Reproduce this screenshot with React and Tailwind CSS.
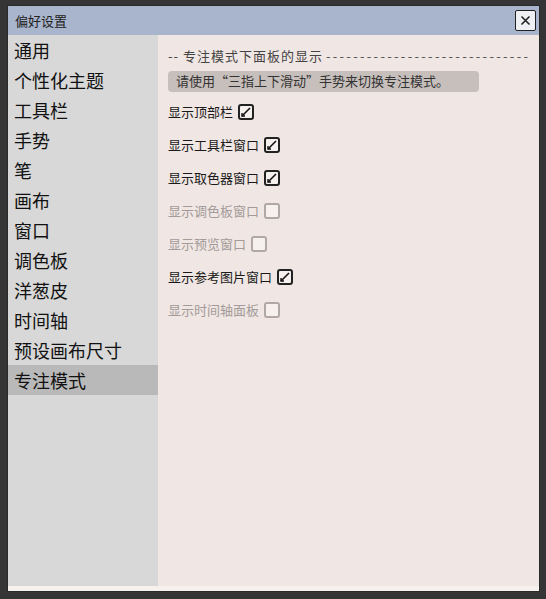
import React from 'react';

const font = { fontFamily: '"Noto Sans CJK SC", "Noto Sans", sans-serif' };

function Check({ on, disabled }) {
  return (
    <span
      className={`inline-flex w-[16px] h-[16px] rounded-[3px] border-2 items-center justify-center ${
        disabled ? 'border-[#b0a8a6]' : 'border-[#222]'
      } bg-[#f6f0ee]`}
    >
      {on && (
        <svg width="10" height="10" viewBox="0 0 10 10">
          <path d="M1 9 L9 1" stroke="#111" strokeWidth="1.6" />
          <path d="M1 6 L1 9 L4 9" stroke="#111" strokeWidth="1.4" fill="none" />
        </svg>
      )}
    </span>
  );
}

export default function App() {
  const nav = ['通用', '个性化主题', '工具栏', '手势', '笔', '画布', '窗口', '调色板', '洋葱皮', '时间轴', '预设画布尺寸', '专注模式'];
  const rows = [
    { label: '显示顶部栏', on: true },
    { label: '显示工具栏窗口', on: true },
    { label: '显示取色器窗口', on: true },
    { label: '显示调色板窗口', disabled: true },
    { label: '显示预览窗口', disabled: true },
    { label: '显示参考图片窗口', on: true },
    { label: '显示时间轴面板', disabled: true },
  ];

  return (
    <div className="w-[546px] h-[599px] bg-[#353535] pt-[5px] pl-[7px]" style={font}>
      <div className="w-[533px] h-[587px] bg-[#f6f1ec] border border-[#2a2a2a] flex flex-col">
        {/* title bar */}
        <div className="h-[29px] bg-[#a9b5cd] flex items-center justify-between pl-[7px] pr-[3px]">
          <span className="text-[13px] text-[#222]">偏好设置</span>
          <button className="w-[21px] h-[21px] border border-[#222] rounded-[2px] bg-[#eef0f4] flex items-center justify-center">
            <svg width="11" height="11" viewBox="0 0 11 11">
              <path d="M1.5 1.5 L9.5 9.5 M9.5 1.5 L1.5 9.5" stroke="#222" strokeWidth="1.6" />
            </svg>
          </button>
        </div>

        <div className="flex flex-1 pb-[5px]">
          {/* sidebar */}
          <div className="w-[150px] shrink-0 bg-[#d8d8d8]">
            {nav.map((n) => (
              <div
                key={n}
                className={`h-[30px] flex items-center pl-[6px] text-[18px] text-[#111] ${
                  n === '专注模式' ? 'bg-[#b9b9b9]' : ''
                }`}
              >
                {n}
              </div>
            ))}
          </div>

          {/* content */}
          <div className="flex-1 min-w-0 bg-[#f0e6e3] pl-[10px] pr-[9px] pt-[11px]">
            <div className="flex items-center text-[13px] text-[#444] whitespace-nowrap">
              <span className="tracking-[1px]">-- 专注模式下面板的显示 </span>
              <span className="ml-[3px] tracking-[2.3px] text-[#555]">------------------------------</span>
            </div>
            <div className="mt-[5px] w-[311px] h-[21px] bg-[#c7bfbb] rounded-[4px] flex items-center pl-[8px] text-[13px] text-[#333]">
              请使用“三指上下滑动”手势来切换专注模式。
            </div>
            <div className="mt-[11px] flex flex-col gap-[15px]">
              {rows.map((r) => (
                <div key={r.label} className="h-[18px] flex items-center gap-[5px]">
                  <span className={`text-[13px] ${r.disabled ? 'text-[#a39b99]' : 'text-[#1a1a1a]'}`}>{r.label}</span>
                  <Check on={r.on} disabled={r.disabled} />
                </div>
              ))}
            </div>
          </div>
        </div>
      </div>
    </div>
  );
}
